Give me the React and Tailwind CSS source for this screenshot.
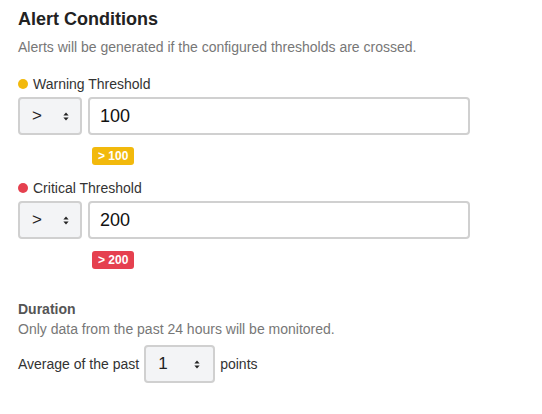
import { useState } from 'react';

function Arrows() {
  return (
    <svg width="6" height="9" viewBox="0 0 6 9" className="shrink-0">
      <path d="M3 0.5 L5.6 3.6 L0.4 3.6 Z" fill="#222" />
      <path d="M3 8.5 L5.6 5.4 L0.4 5.4 Z" fill="#222" />
    </svg>
  );
}

function FakeSelect({ value, className }) {
  return (
    <div className={`flex items-center justify-between h-[38px] border-2 border-[#d0d0d0] rounded-[4px] bg-[#f3f4f6] pl-[12px] pr-[11px] ${className}`}>
      <span className="text-[17px] text-[#222]">{value}</span>
      <Arrows />
    </div>
  );
}

function Threshold({ dot, label, value, badgeBg, mt }) {
  const [val, setVal] = useState(value);
  return (
    <div className={mt}>
      <div className="flex items-center h-[16px] text-[14px] text-[#333]">
        <span className={`w-[10px] h-[10px] rounded-full mr-[5px] ${dot}`} />
        {label}
      </div>
      <div className="flex gap-[6px] mt-[5px] w-[452px]">
        <FakeSelect value=">" className="w-[64px] text-[#333]" />
        <input
          value={val}
          onChange={e => setVal(e.target.value)}
          className="flex-1 h-[38px] border-2 border-[#d0d0d0] rounded-[4px] px-[10px] text-[18px] text-[#111] outline-none"
        />
      </div>
      <div className="flex pl-[74px] mt-[12px]">
        <span className={`flex items-center h-[18px] px-[6px] rounded-[3px] text-[12px] font-bold text-white ${badgeBg}`}>
          &gt; {val}
        </span>
      </div>
    </div>
  );
}

export default function App() {
  return (
    <div className="w-[542px] h-[414px] bg-white pl-[18px] pt-[8px]" style={{ fontFamily: '"Liberation Sans", Arial, sans-serif' }}>
      <h2 className="text-[18px] leading-[22px] font-bold text-[#222]">Alert Conditions</h2>
      <p className="mt-[9px] text-[14px] leading-[16px] text-[#777]">
        Alerts will be generated if the configured thresholds are crossed.
      </p>

      <Threshold dot="bg-[#f2b90c]" label="Warning Threshold" value="100" badgeBg="bg-[#f2b90c]" mt="mt-[21px]" />
      <Threshold dot="bg-[#e5404f]" label="Critical Threshold" value="200" badgeBg="bg-[#e5404f]" mt="mt-[15px]" />

      <div className="mt-[32px]">
        <div className="text-[14px] leading-[16px] font-bold text-[#555]">Duration</div>
        <div className="mt-[4px] text-[14px] leading-[16px] text-[#777]">
          Only data from the past 24 hours will be monitored.
        </div>
        <div className="flex items-center mt-[8px] text-[14px] text-[#333]">
          <span>Average of the past</span>
          <FakeSelect value="1" className="w-[71px] mx-[5px] pr-[13px]" />
          <span>points</span>
        </div>
      </div>
    </div>
  );
}
